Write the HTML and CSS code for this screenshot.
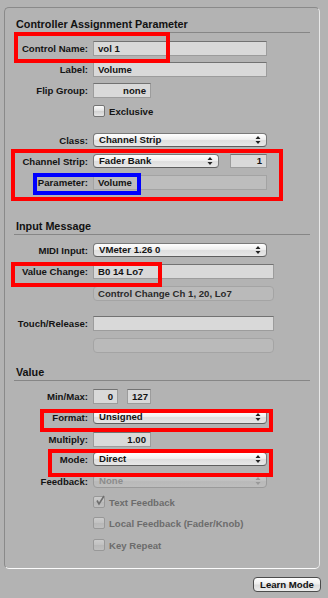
FILE: index.html
```html
<!DOCTYPE html>
<html>
<head>
<meta charset="utf-8">
<link rel="stylesheet" href="styles.css">
</head>
<body>
<div class="page">
  <div class="group">
    <div class="heading h-first">Controller Assignment Parameter</div>

    <div class="row m8"><span class="lbl">Control Name:</span><span class="field w174">vol 1</span></div>
    <div class="row m6"><span class="lbl">Label:</span><span class="field w174">Volume</span></div>
    <div class="row m6"><span class="lbl">Flip Group:</span><span class="field w58 right">none</span></div>
    <div class="row crow m7"><span class="lbl"></span><span class="check"></span><span class="clabel">Exclusive</span></div>

    <div class="row prow m16"><span class="lbl">Class:</span><span class="popup w174">Channel Strip<svg class="arr" viewBox="0 0 6 10" width="6" height="10"><path d="M0.5 4 L3 1 L5.5 4 Z M0.5 6 L3 9 L5.5 6 Z" fill="#222"/></svg></span></div>
    <div class="row prow m7"><span class="lbl">Channel Strip:</span><span class="popup w129">Fader Bank<svg class="arr" viewBox="0 0 6 10" width="6" height="10"><path d="M0.5 4 L3 1 L5.5 4 Z M0.5 6 L3 9 L5.5 6 Z" fill="#222"/></svg></span><span class="field num right">1</span></div>
    <div class="row m7"><span class="lbl">Parameter:</span><span class="field dim w174">Volume</span></div>

    <div class="heading h-input">Input Message</div>
    <div class="row prow m8"><span class="lbl">MIDI Input:</span><span class="popup w174">VMeter 1.26 0<svg class="arr" viewBox="0 0 6 10" width="6" height="10"><path d="M0.5 4 L3 1 L5.5 4 Z M0.5 6 L3 9 L5.5 6 Z" fill="#222"/></svg></span></div>
    <div class="row m7"><span class="lbl">Value Change:</span><span class="field w181">B0 14 Lo7</span></div>
    <div class="row m7"><span class="lbl"></span><span class="display w181">Control Change Ch 1, 20, Lo7</span></div>
    <div class="row m15"><span class="lbl">Touch/Release:</span><span class="field w181"></span></div>
    <div class="row m7"><span class="lbl"></span><span class="display w181"></span></div>

    <div class="heading h-value">Value</div>
    <div class="row m8"><span class="lbl">Min/Max:</span><span class="field w25 right">0</span><span class="field w24 right gap9">127</span></div>
    <div class="row prow m6"><span class="lbl">Format:</span><span class="popup w174">Unsigned<svg class="arr" viewBox="0 0 6 10" width="6" height="10"><path d="M0.5 4 L3 1 L5.5 4 Z M0.5 6 L3 9 L5.5 6 Z" fill="#222"/></svg></span></div>
    <div class="row m8"><span class="lbl">Multiply:</span><span class="field w58 right">1.00</span></div>
    <div class="row prow m5"><span class="lbl">Mode:</span><span class="popup w174">Direct<svg class="arr" viewBox="0 0 6 10" width="6" height="10"><path d="M0.5 4 L3 1 L5.5 4 Z M0.5 6 L3 9 L5.5 6 Z" fill="#222"/></svg></span></div>
    <div class="row prow m8"><span class="lbl">Feedback:</span><span class="popup disabled w174">None<svg class="arr" viewBox="0 0 6 10" width="6" height="10"><path d="M0.5 4 L3 1 L5.5 4 Z M0.5 6 L3 9 L5.5 6 Z" fill="#999"/></svg></span></div>
    <div class="row crow m8"><span class="lbl"></span><span class="check off"><svg viewBox="0 0 12 12" width="12" height="12"><path d="M3 5.5 L5 9 L10 1" fill="none" stroke="#6e6e6e" stroke-width="1.6"/></svg></span><span class="clabel off">Text Feedback</span></div>
    <div class="row crow m9"><span class="lbl"></span><span class="check off"></span><span class="clabel off">Local Feedback (Fader/Knob)</span></div>
    <div class="row crow m10"><span class="lbl"></span><span class="check off"></span><span class="clabel off">Key Repeat</span></div>
  </div>

  <div class="footer"><span class="button">Learn Mode</span></div>

  <div class="mark red" style="left:14px;top:32px;width:156px;height:31px"></div>
  <div class="mark red" style="left:11px;top:149px;width:272px;height:52px"></div>
  <div class="mark blue" style="left:33px;top:173px;width:108px;height:22px"></div>
  <div class="mark red" style="left:11px;top:262px;width:151px;height:25px"></div>
  <div class="mark red" style="left:40px;top:409px;width:233px;height:23px"></div>
  <div class="mark red" style="left:48px;top:449px;width:225px;height:28px"></div>
</div>
</body>
</html>
```

FILE: styles.css
```css
* { box-sizing: border-box; }
html, body { margin: 0; padding: 0; }
body {
  background: #b3b3b3;
  font-family: "Liberation Sans", Arial, sans-serif;
  font-size: 9.6px;
  font-weight: bold;
  color: #141414;
}
.page {
  position: relative;
  width: 328px;
  height: 598px;
  overflow: hidden;
  padding-top: 7px;
}
.group {
  margin: 0 8px 0 4px;
  height: 562px;
  border: 1px solid;
  border-color: #8a8a8a #e8e8e8 #fbfbfb #8a8a8a;
  border-radius: 5px;
  padding: 0 9px;
}
.heading {
  height: 14px;
  line-height: 11px;
  font-size: 10.8px;
  font-weight: bold;
  padding-left: 2px;
  border-bottom: 1px solid #868686;
  color: #111;
}
.h-first { margin-top: 11px; }
.h-input { margin-top: 31px; }
.h-value { margin-top: 14px; }

.row {
  display: flex;
  align-items: center;
  height: 15px;
}
.prow { height: 14px; }
.crow { height: 12px; }
.m5 { margin-top: 5px; }
.m6 { margin-top: 6px; }
.m7 { margin-top: 7px; }
.m8 { margin-top: 8px; }
.m9 { margin-top: 9px; }
.m10 { margin-top: 10px; }
.m15 { margin-top: 15px; }
.m16 { margin-top: 16px; }

.lbl {
  width: 79px;
  flex: none;
  text-align: right;
  padding-right: 5px;
  white-space: nowrap;
}
.field {
  height: 15px;
  line-height: 13px;
  padding: 0 4px;
  background: #d9d9d9;
  border: 1px solid #9c9c9c;
  border-top-color: #727272;
  white-space: nowrap;
  overflow: hidden;
}
.field.dim {
  background: #bdbdbd;
  border-color: #a3a3a3;
}
.right { text-align: right; }
.w174 { width: 174px; }
.w181 { width: 181px; }
.w129 { width: 126px; }
.w58 { width: 58px; }
.w25 { width: 25px; }
.w24 { width: 24px; }
.gap9 { margin-left: 9px; }
.num { width: 37px; height: 14px; line-height: 12px; margin-left: 11px; }

.display {
  height: 15px;
  line-height: 13px;
  padding: 0 4px;
  background: #bababa;
  border: 1px solid #a4a4a4;
  border-radius: 4px;
  color: #2a2a2a;
  white-space: nowrap;
}

.popup {
  position: relative;
  height: 14px;
  line-height: 12px;
  padding: 0 5px;
  border: 1px solid #7a7a7a;
  border-bottom-color: #5e5e5e;
  border-radius: 4px;
  background: linear-gradient(#ffffff, #f0f0f0 45%, #dedede 55%, #e8e8e8);
  white-space: nowrap;
}
.popup .arr {
  position: absolute;
  right: 5px;
  top: 1px;
}
.popup.disabled {
  color: #8c8c8c;
  border-color: #9a9a9a;
  background: linear-gradient(#c8c8c8, #c0c0c0 50%, #b9b9b9 55%, #bdbdbd);
}

.check {
  width: 12px;
  height: 12px;
  flex: none;
  border: 1px solid #747474;
  border-radius: 2px;
  background: linear-gradient(#fbfbfb, #e2e2e2 50%, #d2d2d2 55%, #e6e6e6);
  position: relative;
}
.check svg { position: absolute; left: 0; top: -2px; }
.check.off {
  border-color: #989898;
  background: linear-gradient(#cccccc, #c0c0c0 50%, #b8b8b8 55%, #bfbfbf);
}
.clabel {
  margin-left: 4px;
  white-space: nowrap;
}
.clabel.off { color: #6c6c6c; }

.footer {
  display: flex;
  justify-content: flex-end;
  padding-right: 7px;
  margin-top: 8px;
}
.button {
  width: 68px;
  height: 15px;
  line-height: 13px;
  text-align: center;
  border: 1px solid #4c4c4c;
  border-radius: 4px;
  background: linear-gradient(#ffffff, #eeeeee 45%, #dcdcdc 55%, #ececec);
  color: #111;
}

.mark {
  position: absolute;
  pointer-events: none;
}
.mark.red { border: 4px solid #ff0000; }
.mark.blue { border: 4px solid #0000ff; }
```
